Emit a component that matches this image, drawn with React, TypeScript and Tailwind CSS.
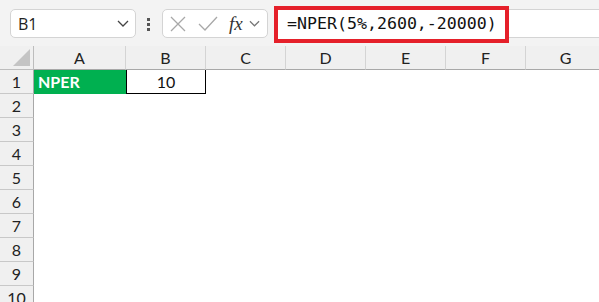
import React from "react";

const cols = ["A", "B", "C", "D", "E", "F", "G"];
const rows = [1, 2, 3, 4, 5, 6, 7, 8, 9, 10];

function Chevron({ className }: { className?: string }) {
  return (
    <svg width="12" height="7" viewBox="0 0 12 7" fill="none" stroke="currentColor" strokeWidth="1.3" className={className}>
      <path d="M1 1l5 5 5-5" />
    </svg>
  );
}

export default function App() {
  return (
    <div className="w-[599px] h-[302px] overflow-hidden bg-white" style={{ fontFamily: "Lato, 'Liberation Sans', sans-serif" }}>
      {/* Toolbar / formula bar */}
      <div className="h-[46px] bg-[#f3f3f3] flex items-start pl-[10px]">
        <div className="mt-[9px] w-[126px] h-[29px] bg-white border border-[#d4d4d4] rounded-[5px] flex items-center pl-[7px] pr-[6px] justify-between">
          <span className="text-[16px] text-[#222]" style={{ fontFamily: "'Open Sans', 'Noto Sans', sans-serif" }}>B1</span>
          <Chevron className="text-[#444]" />
        </div>
        <div className="mt-[18px] ml-[11px] flex flex-col gap-[2px]">
          <span className="w-[3px] h-[3px] bg-[#555]" />
          <span className="w-[3px] h-[3px] bg-[#555]" />
          <span className="w-[3px] h-[3px] bg-[#555]" />
        </div>
        <div className="mt-[9px] ml-[12px] w-[106px] h-[29px] bg-white border border-[#d4d4d4] rounded-[5px] flex items-center pl-[7px]">
          <svg width="16" height="16" viewBox="0 0 16 16" fill="none" stroke="#a8a8a8" strokeWidth="1.3">
            <path d="M1 1l14 14M15 1L1 15" />
          </svg>
          <svg width="20" height="15" viewBox="0 0 20 15" fill="none" stroke="#a8a8a8" strokeWidth="1.3" className="ml-[12px]">
            <path d="M1 8l6 6L19 1" />
          </svg>
          <span className="ml-[11px] text-[19px] italic text-[#333] leading-none" style={{ fontFamily: "'Liberation Serif', serif" }}>fx</span>
          <Chevron className="ml-[6px] text-[#777] w-[11px]" />
        </div>
        <div className="mt-[6px] ml-[6px] w-[235px] h-[37px] border-[4px] border-[#e5202a] bg-white flex items-center pl-[9px]">
          <span className="text-[16.6px] text-[#111]" style={{ fontFamily: "'DejaVu Sans Mono', 'Liberation Mono', monospace" }}>
            =NPER(5%,2600,-20000)
          </span>
        </div>
        <div className="mt-[9px] flex-1 h-[29px] bg-white border-y border-[#d4d4d4]" />
      </div>

      {/* Grid */}
      <div className="grid grid-cols-[34px_92px_80px_80px_80px_80px_80px_80px]">
        {/* header row */}
        <div className="h-[24px] bg-[#f0f0f0] border-r border-b border-[#bdbdbd] flex items-end justify-end pr-[3px] pb-[3px]">
          <svg width="17" height="17" viewBox="0 0 17 17">
            <path d="M17 0L17 17L0 17Z" fill="#c4c4c4" />
          </svg>
        </div>
        {cols.map((c) => (
          <div
            key={c}
            className="h-[24px] bg-[#f0f0f0] border-r border-b border-r-[#d4d4d4] border-b-[#a8a8a8] flex items-center justify-center text-[16px] text-[#222]"
          >
            {c}
          </div>
        ))}

        {rows.map((r) => (
          <React.Fragment key={r}>
            <div className="h-[24px] bg-[#f0f0f0] border-r border-b border-r-[#a8a8a8] border-b-[#c8c8c8] flex items-center justify-center text-[16px] text-[#222]">
              {r}
            </div>
            {cols.map((c) => {
              if (r === 1 && c === "A") {
                return (
                  <div key={c} className="h-[24px] bg-[#00b050] flex items-center pl-[4px] text-[16px] font-bold text-white">
                    NPER
                  </div>
                );
              }
              if (r === 1 && c === "B") {
                return (
                  <div key={c} className="h-[24px] border-x border-b border-black flex items-center justify-center text-[16px] text-[#111]">
                    10
                  </div>
                );
              }
              return <div key={c} className="h-[24px] bg-white" />;
            })}
          </React.Fragment>
        ))}
      </div>
    </div>
  );
}
